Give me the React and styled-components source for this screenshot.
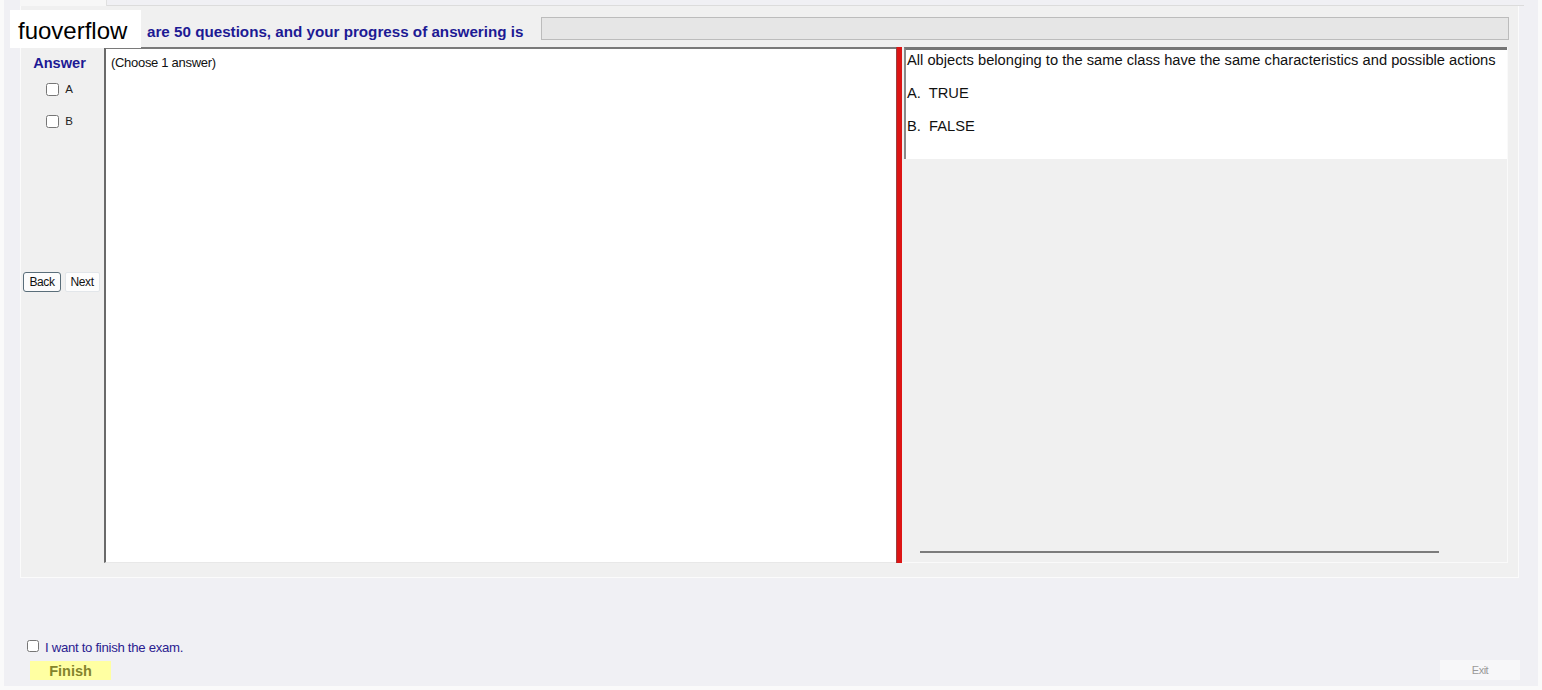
import styled, { createGlobalStyle } from "styled-components";

const GlobalStyle = createGlobalStyle`
  html, body {
    margin: 0;
    padding: 0;
    background: #fafafa;
  }
  body {
    font-family: "Liberation Sans", Arial, sans-serif;
  }
`;

export default function App() {
  return (
    <>
      <GlobalStyle />
      <Window>
        <Watermark>fuoverflow</Watermark>
        <TabStrip>
          <Tab />
          <TabLine />
        </TabStrip>
        <Panel>
          <HeaderRow>
            <Title>are 50 questions, and your progress of answering is</Title>
            <Progress />
          </HeaderRow>
          <BodyRow>
            <AnswerColumn>
              <AnswerTitle>Answer</AnswerTitle>
              <Choice>
                <Box type="checkbox" />
                <span>A</span>
              </Choice>
              <Choice>
                <Box type="checkbox" />
                <span>B</span>
              </Choice>
              <NavRow>
                <NavButton $focused>Back</NavButton>
                <NavButton>Next</NavButton>
              </NavRow>
            </AnswerColumn>
            <QuestionBox>(Choose 1 answer)</QuestionBox>
            <Splitter />
            <RightPane>
              <QuestionText>
                <Line>All objects belonging to the same class have the same characteristics and possible actions</Line>
                <Line>A.&nbsp; TRUE</Line>
                <Line>B.&nbsp; FALSE</Line>
              </QuestionText>
              <Spacer />
              <ScrollLine />
            </RightPane>
          </BodyRow>
        </Panel>
        <Footer>
          <FinishCheck>
            <SmallBox type="checkbox" />
            <span>I want to finish the exam.</span>
          </FinishCheck>
          <FooterRow>
            <FinishButton>Finish</FinishButton>
            <ExitButton>Exit</ExitButton>
          </FooterRow>
        </Footer>
      </Window>
    </>
  );
}

const Window = styled.div`
  position: relative;
  margin: 0 4px;
  height: 686px;
  background: #f0f0f4;
  display: flex;
  flex-direction: column;
`;

const Watermark = styled.div`
  position: absolute;
  left: 6px;
  top: 10px;
  width: 131px;
  height: 38px;
  background: #ffffff;
  color: #000;
  font-family: "Liberation Sans", Arial, sans-serif;
  font-size: 24px;
  line-height: 42px;
  text-indent: 8px;
  z-index: 2;
`;

const TabStrip = styled.div`
  display: flex;
  align-items: flex-end;
  height: 6px;
`;

const Tab = styled.div`
  width: 86px;
  height: 6px;
  margin-left: 16px;
  background: #f7f7f7;
  border-right: 1px solid #e0e0e0;
`;

const TabLine = styled.div`
  flex: 1;
  margin-right: 14px;
  border-bottom: 1px solid #dcdcdc;
`;

const Panel = styled.div`
  margin-left: 16px;
  width: 1499px;
  height: 572px;
  box-sizing: border-box;
  background: #f0f0f0;
  border: 1px solid #fbfbfb;
  border-top: none;
  display: flex;
  flex-direction: column;
`;

const HeaderRow = styled.div`
  display: flex;
  align-items: center;
  height: 23px;
  margin-top: 11px;
`;

const Title = styled.div`
  width: 394px;
  padding-left: 126px;
  font-size: 15.2px;
  font-weight: bold;
  color: #1d1a94;
  line-height: 23px;
  padding-top: 6px;
  white-space: nowrap;
`;

const Progress = styled.div`
  width: 968px;
  height: 23px;
  box-sizing: border-box;
  background: #e6e6e6;
  border: 1px solid #bcbcbc;
`;

const BodyRow = styled.div`
  display: flex;
  margin-top: 7px;
  height: 516px;
`;

const AnswerColumn = styled.div`
  width: 83px;
  display: flex;
  flex-direction: column;
  align-items: center;
`;

const AnswerTitle = styled.div`
  margin-top: 8px;
  margin-left: -6px;
  font-size: 14.6px;
  font-weight: bold;
  color: #1d1a94;
`;

const Choice = styled.label`
  display: flex;
  align-items: center;
  gap: 6px;
  margin-top: 8px;
  margin-left: -6px;
  height: 20px;
  font-size: 11.5px;
  color: #222;
  & + & {
    margin-top: 12px;
  }
`;

const Box = styled.input`
  width: 13px;
  height: 13px;
  margin: 0;
  accent-color: #333;
`;

const NavRow = styled.div`
  display: flex;
  gap: 4px;
  margin-top: 141px;
  margin-left: -2px;
`;

const NavButton = styled.button`
  height: 20px;
  padding: 0 ${(p) => (p.$focused ? "5px" : "5px")};
  font-family: "Liberation Sans", Arial, sans-serif;
  font-size: 12px;
  letter-spacing: -0.4px;
  color: #111;
  background: ${(p) => (p.$focused ? "#fcfcfc" : "#fdfdfd")};
  border: 1px solid ${(p) => (p.$focused ? "#5a6e7a" : "#e2e6ea")};
  border-radius: ${(p) => (p.$focused ? "3px" : "2px")};
`;

const QuestionBox = styled.div`
  width: 792px;
  box-sizing: border-box;
  background: #ffffff;
  border-top: 2px solid #7a7a7a;
  border-left: 2px solid #6a6a6a;
  border-bottom: 1px solid #e8e8e8;
  padding: 6px 5px;
  font-size: 13px;
  letter-spacing: -0.3px;
  color: #111;
`;

const Splitter = styled.div`
  width: 6px;
  background: #dd1515;
  border-left: 1px solid #9a4040;
  box-sizing: border-box;
`;

const RightPane = styled.div`
  width: 606px;
  box-sizing: border-box;
  background: #f0f0f0;
  border-right: 1px solid #fafafa;
  border-bottom: 1px solid #fafafa;
  display: flex;
  flex-direction: column;
`;

const QuestionText = styled.div`
  margin-left: 2px;
  height: 112px;
  box-sizing: border-box;
  background: #ffffff;
  border-top: 3px solid #767676;
  border-left: 2px solid #8a8a8a;
  padding: 1px 2px 0 1px;
  font-size: 14.7px;
  color: #111;
`;

const Line = styled.div`
  height: 33px;
  line-height: 18px;
  white-space: nowrap;
`;

const Spacer = styled.div`
  flex: 1;
`;

const ScrollLine = styled.div`
  width: 519px;
  margin: 0 0 9px 18px;
  height: 2px;
  background: #7c7c7c;
`;

const Footer = styled.div`
  display: flex;
  flex-direction: column;
  margin-top: 62px;
`;

const FinishCheck = styled.label`
  display: flex;
  align-items: center;
  gap: 6px;
  margin-left: 23px;
  font-size: 13.2px;
  letter-spacing: -0.3px;
  color: #2a2090;
`;

const SmallBox = styled.input`
  width: 12px;
  height: 12px;
  margin: 0;
  position: relative;
  top: -2px;
`;

const FooterRow = styled.div`
  display: flex;
  justify-content: space-between;
  align-items: center;
  margin-top: 5px;
  padding: 0 18px 0 26px;
`;

const FinishButton = styled.div`
  width: 81px;
  height: 19px;
  background: #ffffa2;
  color: #84842c;
  font-size: 14.5px;
  font-weight: bold;
  text-align: center;
  line-height: 20px;
`;

const ExitButton = styled.div`
  width: 80px;
  height: 20px;
  background: #f7f7f9;
  color: #9a9a9a;
  font-size: 11px;
  letter-spacing: -0.5px;
  text-align: center;
  line-height: 20px;
`;
